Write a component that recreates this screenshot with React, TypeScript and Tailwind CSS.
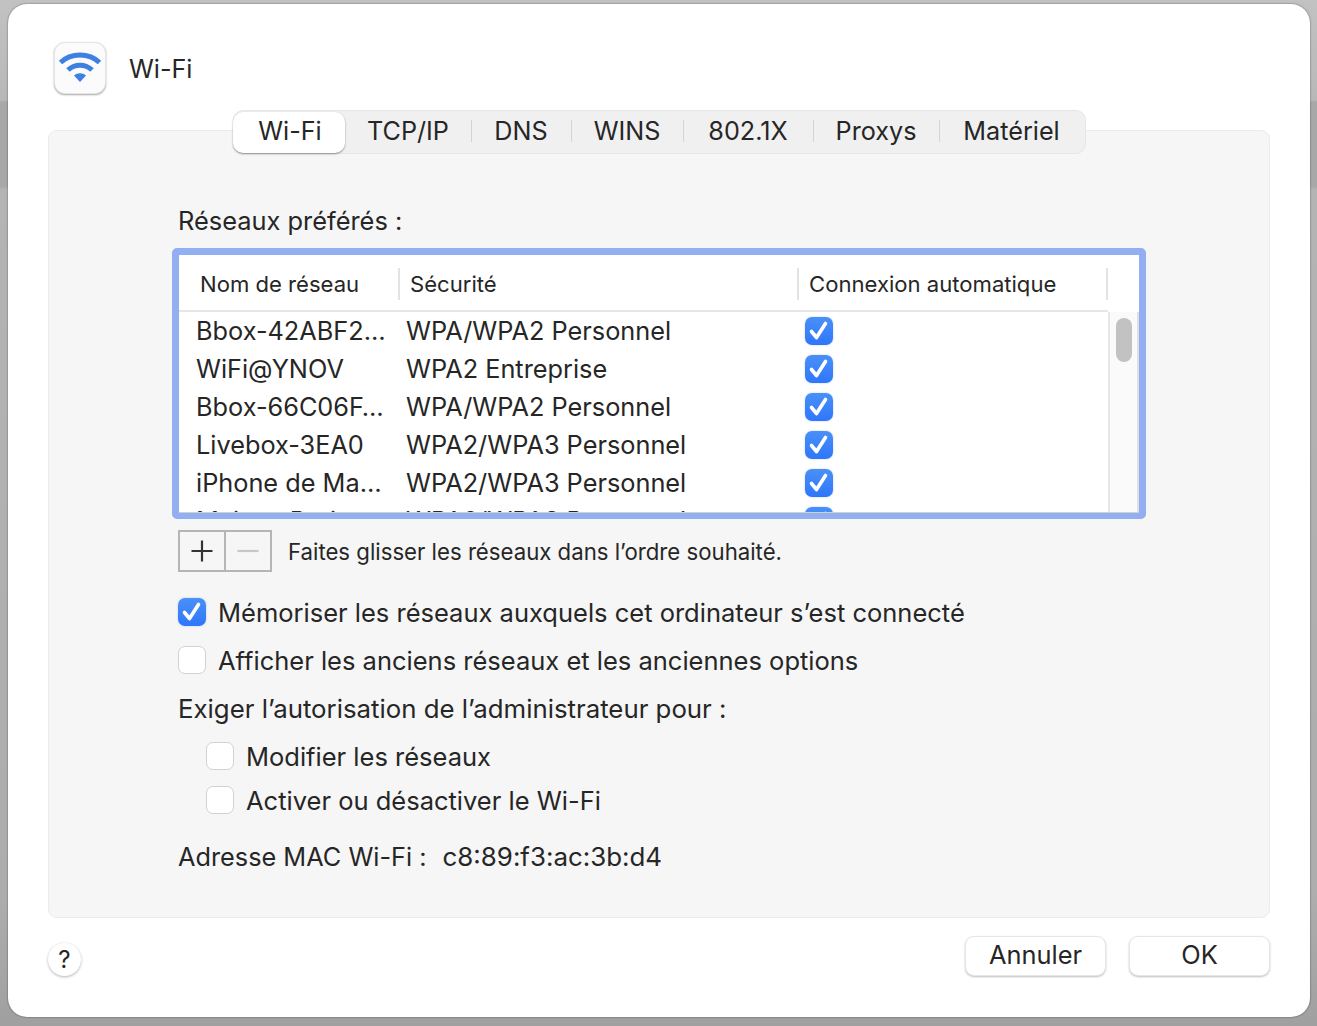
import React from "react";

const font = { fontFamily: "Inter, 'Liberation Sans', sans-serif" };

function Check({ className = "" }: { className?: string }) {
  return (
    <svg viewBox="0 0 28 28" className={className}>
      <path d="M6.5 14.5 L11.5 20.5 L20.5 6.5" fill="none" stroke="#fff" strokeWidth="3.6" strokeLinecap="round" strokeLinejoin="round" />
    </svg>
  );
}

function CheckedBox() {
  return (
    <div className="w-[28px] h-[28px] shrink-0 rounded-[7px] bg-gradient-to-b from-[#4a90f7] to-[#2f76fb] shadow-[0_0_2px_rgba(47,118,251,0.4)]">
      <Check className="w-[28px] h-[28px]" />
    </div>
  );
}

function EmptyBox() {
  return <div className="w-[28px] h-[28px] shrink-0 rounded-[7px] bg-white border border-[#d2d2d2]" />;
}

const rows = [
  ["Bbox-42ABF2…", "WPA/WPA2 Personnel"],
  ["WiFi@YNOV", "WPA2 Entreprise"],
  ["Bbox-66C06F…", "WPA/WPA2 Personnel"],
  ["Livebox-3EA0", "WPA2/WPA3 Personnel"],
  ["iPhone de Ma…", "WPA2/WPA3 Personnel"],
  ["Maison Paris", "WPA2/WPA3 Personnel"],
];

const tabs = [
  ["TCP/IP", "w-[126px]"],
  ["DNS", "w-[100px]"],
  ["WINS", "w-[112px]"],
  ["802.1X", "w-[130px]"],
  ["Proxys", "w-[126px]"],
  ["Matériel", "w-[145px]"],
];

export default function App() {
  return (
    <div
      style={font}
      className="w-[1317px] h-[1026px] overflow-hidden bg-[linear-gradient(to_bottom,#c2c2c2_0px,#b8b8b8_100px,#a8a8a8_102px,#a8a8a8_186px,#b4b4b4_190px,#adadad_900px,#a0a0a0_1026px)] pt-[4px] pl-[8px] text-[#262626]"
    >
      <div className="w-[1302px] h-[1013px] bg-white rounded-[19px] shadow-[0_0_2px_rgba(0,0,0,0.55)] pt-[38px] px-[40px] flex flex-col">
        <header className="h-[88px] flex items-start shrink-0">
          <div className="w-[52px] h-[52px] ml-[6px] rounded-[11px] bg-[#fbfbfb] border border-[#e4e4e4] shadow-[0_1px_2px_rgba(0,0,0,0.35)] flex items-start justify-center pt-[8px]">
            <svg viewBox="0 0 44 32" className="w-[44px] h-[32px]">
              <path d="M2.5 11.5 C13 1.5 31 1.5 41.5 11.5" fill="none" stroke="#3c80e3" strokeWidth="5" />
              <path d="M10 19 C16.5 12.5 27.5 12.5 34 19" fill="none" stroke="#3c80e3" strokeWidth="5" />
              <path d="M16 24.5 C19.5 21.5 24.5 21.5 28 24.5 L22 31 Z" fill="#3c80e3" />
            </svg>
          </div>
          <span className="ml-[23px] mt-[14px] text-[25.2px] leading-[26px]">Wi-Fi</span>
        </header>

        <main className="relative w-[1222px] h-[788px] shrink-0 bg-[#f6f6f6] border border-[#ebebeb] rounded-[9px] px-[129px] pt-[76px]">
          <div className="absolute left-[184px] -top-[21px] h-[44px] w-[853px] rounded-[10px] bg-[#f0f0f0] border border-[#e6e6e6] flex items-center text-[25.2px]">
            <div className="w-[112px] h-[41px] -ml-px pl-[2px] rounded-[10px] bg-white shadow-[0_1px_2px_rgba(0,0,0,0.4)] flex items-center justify-center">Wi-Fi</div>
            {tabs.map(([t, w], i) => (
              <div key={t} className={`${w} relative flex items-center justify-center`}>
                {t}
                {i > 0 && <span className="absolute left-0 top-[calc(50%-12px)] h-[22px] w-px bg-[#d4d4d4]" />}
              </div>
            ))}
          </div>

          <p className="text-[25.4px] leading-[28px]">Réseaux préférés :</p>

          <div className="mt-[13px] -ml-[6px] w-[974px] h-[271px] rounded-[5px] border-[7px] border-b-[6px] border-[#92aff2] bg-white overflow-hidden">
            <div className="h-[57px] w-[929px] pt-[3px] flex items-center text-[22.1px] border-b-2 border-[#e6e6e6]">
              <div className="w-[219px] pl-[21px] leading-[32px]">Nom de réseau</div>
              <div className="w-[399px] pl-[10px] border-l-2 border-[#e3e3e3] leading-[32px]">Sécurité</div>
              <div className="w-[311px] pl-[10px] border-x-2 border-[#e3e3e3] leading-[32px]">Connexion automatique</div>
            </div>
            <div className="flex h-[201px] border-b border-[#d0d0d0]">
              <div className="w-[931px] h-full overflow-hidden border-r-2 border-[#e6e6e6]">
                {rows.map(([a, b]) => (
                  <div key={a} className="h-[38px] flex items-center text-[25.3px] shrink-0">
                    <div className="w-[227px] pl-[17px]">{a}</div>
                    <div className="w-[399px]">{b}</div>
                    <CheckedBox />
                  </div>
                ))}
              </div>
              <div className="flex-1 bg-[#fafafa] pl-[6px] pt-[6px] border-r-2 border-[#e0e0e0]">
                <div className="w-[16px] h-[44px] rounded-full bg-[#c2c2c2]" />
              </div>
            </div>
          </div>

          <div className="mt-[11px] flex items-center">
            <div className="w-[94px] h-[42px] border-2 border-[#b5b5b5] flex">
              <div className="w-[46px] border-r-2 border-[#b5b5b5] flex items-center justify-center">
                <svg viewBox="0 0 24 24" className="w-[24px] h-[24px]"><path d="M12 1.5V22.5M1.5 12H22.5" stroke="#333" strokeWidth="2.2" /></svg>
              </div>
              <div className="flex-1 flex items-center justify-center">
                <svg viewBox="0 0 24 24" className="w-[24px] h-[24px]"><path d="M1.5 12H22.5" stroke="#c6c6c6" strokeWidth="2.2" /></svg>
              </div>
            </div>
            <span className="ml-[16px] pt-[2px] text-[22.2px]">Faites glisser les réseaux dans l’ordre souhaité.</span>
          </div>

          <div className="mt-[26px] flex items-center h-[28px] gap-[12px] text-[25.5px]"><CheckedBox /><span className="pt-[2px]">Mémoriser les réseaux auxquels cet ordinateur s’est connecté</span></div>
          <div className="mt-[20px] flex items-center h-[28px] gap-[12px] text-[25.5px]"><EmptyBox /><span className="pt-[2px]">Afficher les anciens réseaux et les anciennes options</span></div>
          <div className="mt-[20px] h-[28px] flex items-center text-[25.8px]"><span className="pt-[2px]">Exiger l’autorisation de l’administrateur pour :</span></div>
          <div className="mt-[20px] ml-[28px] flex items-center h-[28px] gap-[12px] text-[25.5px]"><EmptyBox /><span className="pt-[2px]">Modifier les réseaux</span></div>
          <div className="mt-[16px] ml-[28px] flex items-center h-[28px] gap-[12px] text-[25.5px]"><EmptyBox /><span className="pt-[2px]">Activer ou désactiver le Wi-Fi</span></div>
          <div className="mt-[28px] h-[28px] flex items-center"><span className="pt-[2px] text-[25.3px]">Adresse MAC Wi-Fi :</span><span className="ml-[16px] pt-[2px] text-[25.9px]">c8:89:f3:ac:3b:d4</span></div>
        </main>

        <footer className="flex items-start mt-[18px]">
          <div className="mt-[7px] w-[33px] h-[33px] rounded-full bg-white shadow-[0_1px_3px_rgba(0,0,0,0.3)] flex items-center justify-center text-[24px]">?</div>
          <div className="ml-auto flex gap-[23px]">
            <div className="w-[141px] h-[40px] rounded-[9px] bg-white border border-[#e6e6e6] shadow-[0_1px_2px_rgba(0,0,0,0.25)] flex items-center justify-center text-[25.4px] pb-[2px]">Annuler</div>
            <div className="w-[141px] h-[40px] rounded-[9px] bg-white border border-[#e6e6e6] shadow-[0_1px_2px_rgba(0,0,0,0.25)] flex items-center justify-center text-[25.4px] pb-[2px]">OK</div>
          </div>
        </footer>
      </div>
    </div>
  );
}
